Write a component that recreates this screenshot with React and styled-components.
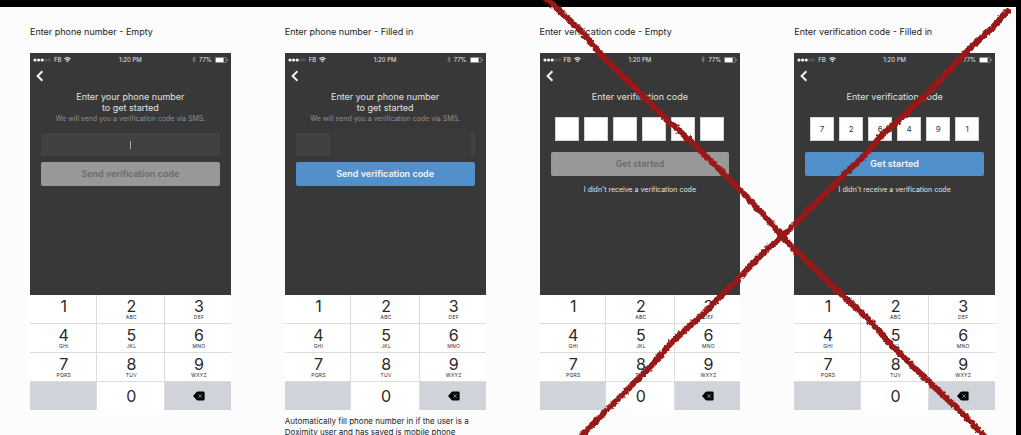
import React from 'react';
import styled, { createGlobalStyle, css } from 'styled-components';

const GlobalStyle = createGlobalStyle`
  *, *::before, *::after { box-sizing: border-box; }

  body {
    margin: 0;
    background: #000;
    font-family: Inter, 'Liberation Sans', sans-serif;
  }

  h2, p { margin: 0; font-weight: 400; }
  button, input { font-family: inherit; margin: 0; }
`;

const Page = styled.main`
  position: relative;
  height: 100vh;
  padding: 7px 5px 0 0;
  overflow: hidden;
  background: #000;
`;

const Board = styled.div`
  display: grid;
  grid-template-columns: repeat(4, 1fr);
  gap: 54px;
  min-height: 100%;
  padding: 17px 21px 0 30px;
  background: #fcfcfc;
`;

const Column = styled.section`
  display: flex;
  flex-direction: column;
  min-width: 0;
`;

const Title = styled.h2`
  margin-bottom: 14px;
  font-size: 9px;
  line-height: 15px;
  color: #222;
  white-space: nowrap;
`;

const Note = styled.p`
  margin-top: 6px;
  font-size: 8px;
  line-height: 11px;
  color: #222;
`;

const Screen = styled.form`
  display: flex;
  flex-direction: column;
  height: 242px;
  background: #383838;
`;

const StatusBar = styled.div`
  display: grid;
  grid-template-columns: 1fr auto 1fr;
  align-items: center;
  height: 13px;
  padding: 0 3px;
  font-size: 6px;
  line-height: 8px;
  color: #e6e6e6;
`;

const StatusGroup = styled.div`
  display: flex;
  align-items: center;
  justify-content: ${props => props.$end ? 'flex-end' : 'flex-start'};
  gap: 3px;
`;

const BackButton = styled.button`
  display: flex;
  align-self: flex-start;
  padding: 4px 6px;
  border: 0;
  background: none;
`;

const Body = styled.div`
  display: flex;
  flex-direction: column;
  align-items: center;
  padding: 5px 11px 0;
`;

const Heading = styled.label`
  font-size: 9px;
  line-height: 11px;
  text-align: center;
  color: #e2e2e2;
`;

const Hint = styled.p`
  font-size: 7px;
  line-height: 11px;
  color: #8f8f8f;
  white-space: nowrap;
`;

const PhoneField = styled.div`
  position: relative;
  width: 100%;
  margin: 9px 0 6px;
`;

const PhoneInput = styled.input`
  display: block;
  width: 100%;
  height: 23px;
  border: 0;
  border-radius: 1px;
  background: #414141;
  color: #e2e2e2;
  font-size: 9px;
  text-align: center;

  ${props => props.$masked && css`
    background: linear-gradient(
      90deg,
      #414141 34px,
      #3a3a3a 34px,
      #3a3a3a calc(100% - 4px),
      #414141 calc(100% - 4px)
    );
  `}
`;

const Caret = styled.span`
  position: absolute;
  top: 8px;
  left: 50%;
  width: 1px;
  height: 8px;
  background: #a8a8a8;
`;

const CodeRow = styled.div`
  display: flex;
  gap: 5px;
  margin: 15px 0 11px;
`;

const CodeInput = styled.input`
  width: 24px;
  height: 24px;
  padding: 0;
  border: 1px solid #d4d4d4;
  background: #fff;
  color: #383838;
  font-size: 8px;
  text-align: center;
`;

const SubmitButton = styled.button`
  width: 100%;
  height: 24px;
  padding: 0;
  border: 0;
  border-radius: 2px;
  background: ${props => props.$active ? '#5190cb' : '#989898'};
  color: ${props => props.$active ? '#f2f6fa' : '#6b6b6b'};
  font-size: 9px;
  font-weight: 600;
  line-height: 24px;
`;

const ResendLink = styled.a`
  margin-top: 9px;
  font-size: 7px;
  line-height: 10px;
  color: #e2e2e2;
  text-decoration: none;
  white-space: nowrap;
`;

const Keypad = styled.div`
  display: grid;
  grid-template-columns: 66fr 68fr 66fr;
  grid-auto-rows: 28px;
  gap: 1px;
  background: #dcdcdc;
`;

const Key = styled.button`
  display: flex;
  flex-direction: column;
  align-items: center;
  justify-content: ${props => props.$center ? 'center' : 'flex-start'};
  padding: ${props => props.$center ? '0 0 0 2px' : '3px 0 0 2px'};
  border: 0;
  background: ${props => props.$muted ? '#d0d3da' : '#fff'};
  color: #2a2a2a;
  font-size: 16px;
  line-height: 16px;

  small {
    font-size: 5px;
    line-height: 7px;
    letter-spacing: 0.05em;
  }
`;

const KeyBlank = styled.div`
  background: #d0d3da;
`;

const Scribble = styled.svg`
  position: absolute;
  inset: 0;
  width: 100%;
  height: 100%;
  pointer-events: none;
`;

const SignalIcon = () => (
  <svg width="18" height="4" viewBox="0 0 18 4" aria-hidden="true">
    {[2, 5.6, 9.2].map(x => <circle key={x} cx={x} cy="2" r="1.6" fill="#f4f4f4" />)}
    {[12.8, 16.2].map(x => <circle key={x} cx={x} cy="2" r="1.2" fill="none" stroke="#858585" strokeWidth="0.5" />)}
  </svg>
);

const WifiIcon = () => (
  <svg width="7" height="6" viewBox="0 0 7 6" fill="none" stroke="#dedede" aria-hidden="true">
    <path d="M0.4 1.9Q3.5 -0.7 6.6 1.9" strokeWidth="1.2" />
    <path d="M1.5 3.2Q3.5 1.6 5.5 3.2" strokeWidth="1.1" />
    <path d="M2.4 4L3.5 5.6L4.6 4Q3.5 3.2 2.4 4Z" fill="#dedede" stroke="none" />
  </svg>
);

const BluetoothIcon = () => (
  <svg width="4" height="7" viewBox="0 0 4 7" fill="none" stroke="#9a9a9a" strokeWidth="0.6" aria-hidden="true">
    <path d="M0.5 2L3.3 4.8L2 6.3V0.7L3.3 2.2L0.5 5" />
  </svg>
);

const BatteryIcon = () => (
  <svg width="13" height="6" viewBox="0 0 13 6" aria-hidden="true">
    <rect x="0.3" y="0.3" width="10.8" height="5.4" rx="1" fill="none" stroke="#c4c4c4" strokeWidth="0.5" />
    <rect x="0.8" y="0.8" width="7.8" height="4.4" fill="#fff" />
    <path d="M11.9 1.6Q13.2 3 11.9 4.4Z" fill="#c4c4c4" />
  </svg>
);

const ChevronIcon = () => (
  <svg width="8" height="12" viewBox="0 0 8 12" fill="none" stroke="#f0f0f0" strokeWidth="2" aria-hidden="true">
    <path d="M6.4 1.2L1.6 6L6.4 10.8" />
  </svg>
);

const DeleteIcon = () => (
  <svg width="12" height="10" viewBox="0 0 12 10" aria-hidden="true">
    <path d="M0 5L3.4 1.2Q4 0.6 4.8 0.6H10.4Q11.6 0.6 11.6 1.8V8.2Q11.6 9.4 10.4 9.4H4.8Q4 9.4 3.4 8.8Z" fill="#050505" />
    <path d="M5.4 3.4L8.8 6.8M8.8 3.4L5.4 6.8" stroke="#b9bcc2" strokeWidth="0.7" />
  </svg>
);

const keys = [
  ['1', ''], ['2', 'ABC'], ['3', 'DEF'],
  ['4', 'GHI'], ['5', 'JKL'], ['6', 'MNO'],
  ['7', 'PQRS'], ['8', 'TUV'], ['9', 'WXYZ'],
];

function PhoneKeypad() {
  return (
    <Keypad>
      {keys.map(([digit, letters]) => (
        <Key key={digit} type="button">
          {digit}
          {letters && <small>{letters}</small>}
        </Key>
      ))}
      <KeyBlank />
      <Key type="button" $center>0</Key>
      <Key type="button" $center $muted aria-label="Delete">
        <DeleteIcon />
      </Key>
    </Keypad>
  );
}

function PhoneScreen({ children }) {
  return (
    <Screen onSubmit={e => e.preventDefault()}>
      <StatusBar>
        <StatusGroup>
          <SignalIcon />
          <span>FB</span>
          <WifiIcon />
        </StatusGroup>
        <span>1:20 PM</span>
        <StatusGroup $end>
          <BluetoothIcon />
          <span>77%</span>
          <BatteryIcon />
        </StatusGroup>
      </StatusBar>
      <BackButton type="button" aria-label="Back">
        <ChevronIcon />
      </BackButton>
      <Body>{children}</Body>
    </Screen>
  );
}

function NumberStep({ id, title, filled, note }) {
  return (
    <Column>
      <Title>{title}</Title>
      <PhoneScreen>
        <Heading htmlFor={id}>
          Enter your phone number<br />
          to get started
        </Heading>
        <Hint>We will send you a verification code via SMS.</Hint>
        <PhoneField>
          <PhoneInput id={id} type="tel" $masked={filled} />
          {!filled && <Caret />}
        </PhoneField>
        <SubmitButton $active={filled}>Send verification code</SubmitButton>
      </PhoneScreen>
      <PhoneKeypad />
      {note && <Note>{note}</Note>}
    </Column>
  );
}

function CodeStep({ id, title, code }) {
  return (
    <Column>
      <Title>{title}</Title>
      <PhoneScreen>
        <Heading htmlFor={`${id}-0`}>Enter verification code</Heading>
        <CodeRow>
          {Array.from({ length: 6 }, (_, i) => (
            <CodeInput
              key={i}
              id={`${id}-${i}`}
              inputMode="numeric"
              maxLength={1}
              aria-label={`Digit ${i + 1}`}
              defaultValue={code[i] || ''}
            />
          ))}
        </CodeRow>
        <SubmitButton $active={code.length === 6}>Get started</SubmitButton>
        <ResendLink href="#resend">I didn't receive a verification code</ResendLink>
      </PhoneScreen>
      <PhoneKeypad />
    </Column>
  );
}

export default function App() {
  return (
    <Page>
      <GlobalStyle />
      <Board>
        <NumberStep id="phone-empty" title="Enter phone number - Empty" />
        <NumberStep
          id="phone-filled"
          title="Enter phone number - Filled in"
          filled
          note="Automatically fill phone number in if the user is a Doximity user and has saved is mobile phone"
        />
        <CodeStep id="code-empty" title="Enter verification code - Empty" code="" />
        <CodeStep id="code-filled" title="Enter verification code - Filled in" code="726491" />
      </Board>

      {/* red marker cross over the two code steps */}
      <Scribble viewBox="0 0 1021 435" preserveAspectRatio="none" aria-hidden="true">
        <filter
          id="rough"
          filterUnits="userSpaceOnUse"
          x="0"
          y="0"
          width="1021"
          height="435"
          colorInterpolationFilters="sRGB"
        >
          <feTurbulence type="fractalNoise" baseFrequency="0.3" numOctaves="2" seed="4" />
          <feDisplacementMap in="SourceGraphic" scale="4" xChannelSelector="R" yChannelSelector="G" />
        </filter>
        <g filter="url(#rough)" fill="none" stroke="#981917" strokeWidth="6" strokeLinejoin="round" strokeLinecap="round">
          <path d="M545 -3L581 31L604 58L631 84L668 121L694 144L721 171L744 194L769 221L791 246L814 268L838 291L868 319L894 348L928 381L958 409L987 439" />
          <path d="M1008 11L991 29L964 54L944 76L928 93L901 118L881 136L864 156L848 171L821 198L798 221L782 237L768 248L741 276L721 296L701 316L671 343L654 363L634 383L611 406L578 439" />
        </g>
      </Scribble>
    </Page>
  );
}
